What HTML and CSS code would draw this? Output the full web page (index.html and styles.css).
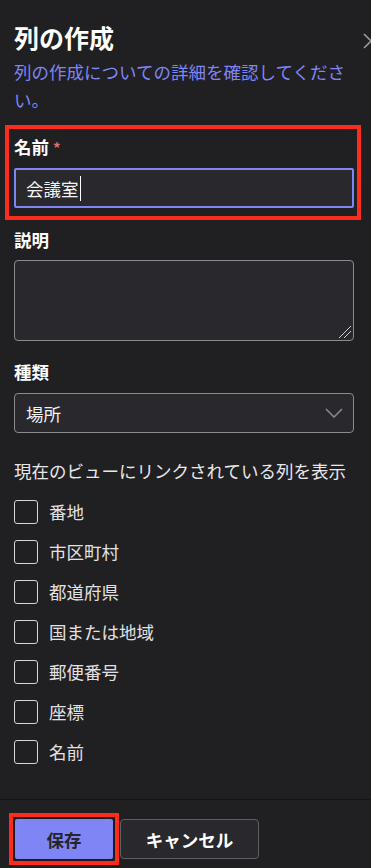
FILE: index.html
```
<!DOCTYPE html>
<html>
<head>
<meta charset="utf-8">
<meta name="viewport" content="width=device-width, initial-scale=1">
<link rel="stylesheet" href="styles.css">
</head>
<body>

<div class="panel">
	<div class="collapse">
		<svg width="12" height="18" viewBox="0 0 12 18"><polyline points="1,1 8,8 1,15" fill="none" stroke="#9a9a9e" stroke-width="1.6"/></svg>
	</div>

	<div class="head">
		<div class="title">列の作成</div>
		<div class="subtitle">列の作成についての詳細を確認してください。</div>
	</div>

	<div class="field highlight">
		<div class="label">名前 <span class="req">*</span></div>
		<div class="textbox focused">会議室<span class="caret"></span></div>
	</div>

	<div class="field">
		<div class="label">説明</div>
		<div class="textarea">
			<svg class="grip" width="14" height="14" viewBox="0 0 14 14">
				<line x1="1" y1="13" x2="13" y2="1" stroke="#cfcfcf" stroke-width="1"/>
				<line x1="6" y1="13" x2="13" y2="6" stroke="#cfcfcf" stroke-width="1"/>
			</svg>
		</div>
	</div>

	<div class="field kind">
		<div class="label">種類</div>
		<div class="textbox select">
			<span>場所</span>
			<svg width="18" height="10" viewBox="0 0 18 10"><polyline points="1,1 9,9 17,1" fill="none" stroke="#8c8c90" stroke-width="1.5"/></svg>
		</div>
	</div>

	<div class="caption">現在のビューにリンクされている列を表示</div>

	<div class="checks">
		<div class="check"><span class="box"></span>番地</div>
		<div class="check"><span class="box"></span>市区町村</div>
		<div class="check"><span class="box"></span>都道府県</div>
		<div class="check"><span class="box"></span>国または地域</div>
		<div class="check"><span class="box"></span>郵便番号</div>
		<div class="check"><span class="box"></span>座標</div>
		<div class="check"><span class="box"></span>名前</div>
	</div>

	<div class="footer">
		<div class="mark"><button class="btn primary">保存</button></div>
		<button class="btn">キャンセル</button>
	</div>
</div>

</body>
</html>
```

FILE: styles.css
```
html, body {
	margin: 0;
	padding: 0;
	background: #201f22;
	overflow: hidden;
}

body {
	font-family: "Noto Sans CJK JP", "Noto Sans", sans-serif;
	font-size: 17.5px;
	color: #e8e8e8;
}

.panel {
	position: relative;
	width: 371px;
	height: 868px;
}

.collapse {
	position: absolute;
	top: 31px;
	left: 363px;
}

.head {
	padding: 21px 14px 0 14px;
}

.title {
	font-size: 25px;
	line-height: 32px;
	font-weight: bold;
	color: #ffffff;
}

.subtitle {
	margin-top: 5px;
	line-height: 27.5px;
	color: #7f85f5;
}

.field {
	margin: 8px 0 0 0;
	padding: 0 17px 0 14px;
}

.field.highlight {
	margin: 12px 10px 0 5px;
	padding: 6px 3px 8px 5px;
	border: 4px solid #ff2b1c;
}

.field.kind {
	margin-top: 19px;
}

.label {
	font-weight: bold;
	line-height: 24px;
	color: #ffffff;
	margin-bottom: 8px;
}

.kind .label {
	margin-bottom: 9px;
}

.req {
	color: #dc6d6d;
	font-size: 15px;
}

.textbox {
	box-sizing: border-box;
	height: 40px;
	width: 340px;
	background: #29282d;
	border: 1px solid #8b8b8f;
	border-radius: 4px;
	padding: 0 11px;
	display: flex;
	align-items: center;
	color: #f2f2f2;
}

.textbox.focused {
	border: 2px solid #7f85f5;
	border-radius: 2px;
	padding-left: 10px;
}

.caret {
	display: inline-block;
	width: 0;
	height: 25px;
	border-left: 1.5px solid #ffffff;
	margin-left: 1px;
}

.select {
	justify-content: space-between;
	padding-right: 10px;
}

.textarea {
	position: relative;
	box-sizing: border-box;
	width: 340px;
	height: 81px;
	background: #29282d;
	border: 1px solid #8b8b8f;
	border-radius: 4px;
}

.grip {
	position: absolute;
	right: 1px;
	bottom: 1px;
}

.caption {
	margin-top: 26px;
	padding-left: 14px;
	line-height: 24px;
	color: #e8e8e8;
}

.checks {
	margin-top: 17px;
	padding-left: 14px;
	display: flex;
	flex-direction: column;
	gap: 16px;
}

.check {
	display: flex;
	align-items: center;
	height: 24px;
	line-height: 24px;
	color: #e2e2e2;
}

.box {
	box-sizing: border-box;
	width: 24px;
	height: 24px;
	border: 1px solid #d6d6d6;
	border-radius: 3px;
	margin-right: 11px;
}

.footer {
	position: absolute;
	left: 0;
	right: 0;
	bottom: 0;
	height: 69px;
	border-top: 1px solid #141316;
	padding: 13px 0 0 9px;
	display: flex;
	align-items: flex-start;
	gap: 1px;
	box-sizing: border-box;
}

.mark {
	border: 4px solid #ff2b1c;
	display: flex;
}

.btn {
	font-family: "Noto Sans CJK JP", "Noto Sans", sans-serif;
	font-size: 17.5px;
	font-weight: bold;
	height: 40px;
	margin-top: 6px;
	padding: 0 20px;
	width: 139px;
	background: #29282d;
	color: #ffffff;
	border: 1px solid #5f5e63;
	border-radius: 4px;
}

.btn.primary {
	width: 102px;
	height: 44px;
	margin-top: 0;
	background: #7f85f5;
	color: #26252a;
	border: 2px solid #1c1b1f;
}
```
